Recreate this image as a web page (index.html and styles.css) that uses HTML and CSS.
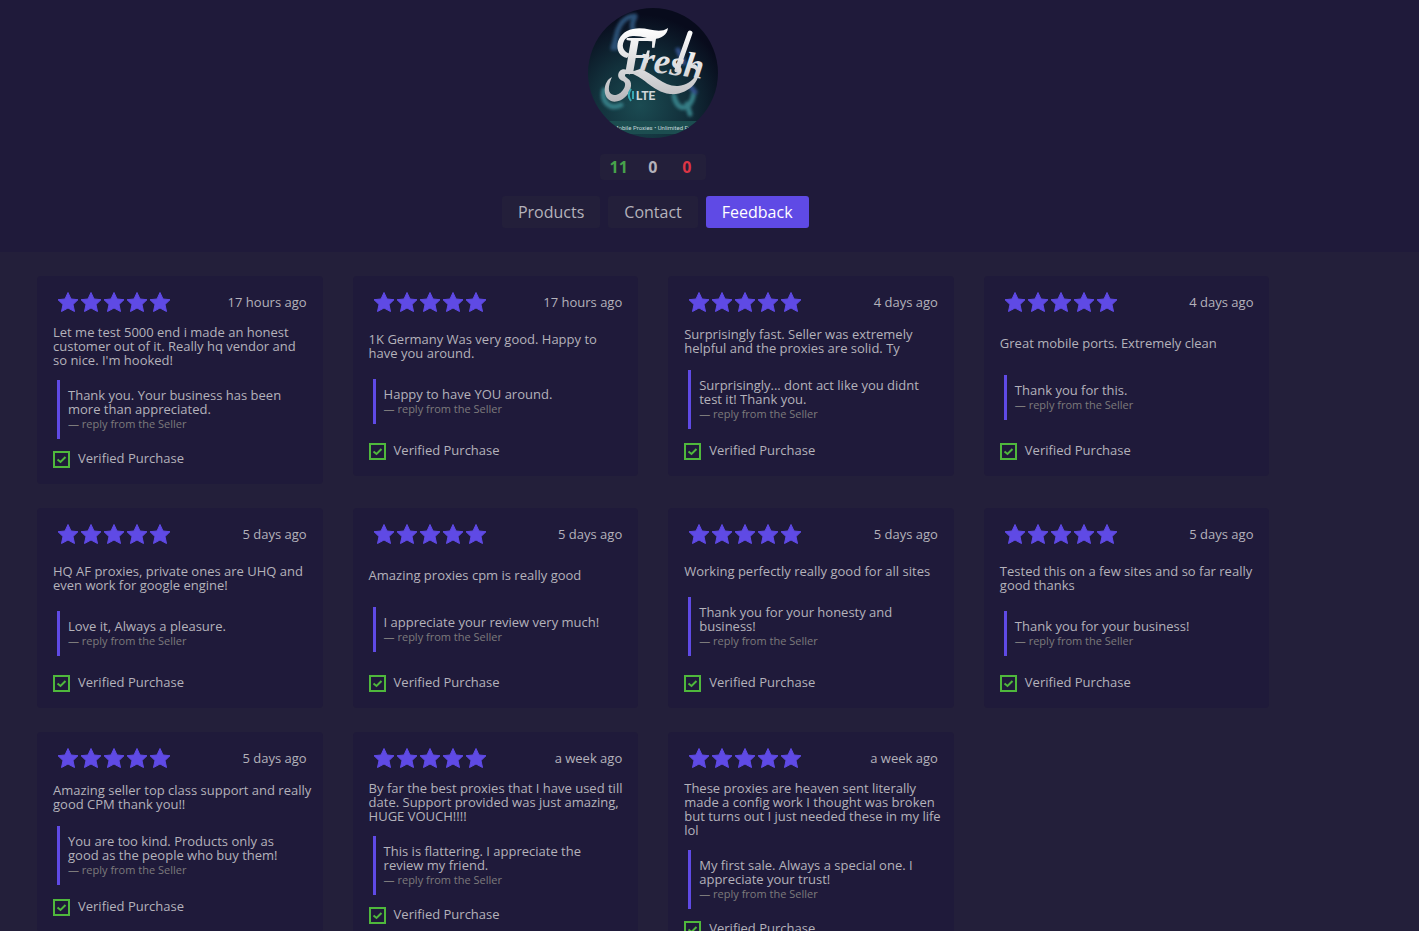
FILE: index.html
```
<!DOCTYPE html>
<html lang="en">

<head>
    <meta charset="UTF-8">
    <meta name="viewport" content="width=device-width, initial-scale=1.0">
    <title>Feedback</title>
    <link rel="stylesheet" href="styles.css">
</head>

<body>
    <svg class="sprite" aria-hidden="true">
        <symbol id="stars" viewBox="0 0 113 21">
            <g stroke-width="1" stroke-linejoin="round">
                <path id="star" d="M10 .500 13 7 20 7.700 15 12.500 16.500 19.500 10 16 3.500 19.500 5 12.500 0 7.700 7 7z" />
                <use href="#star" x="23" />
                <use href="#star" x="46" />
                <use href="#star" x="69" />
                <use href="#star" x="92" />
            </g>
        </symbol>
        <symbol id="check" viewBox="0 0 17 17">
            <rect x="1" y="1" width="15" height="15" fill="none" stroke-width="2" />
            <path d="M4.500 8.500 7.500 11 12.500 6" fill="none" stroke-width="2" />
        </symbol>
    </svg>

    <header class="top">
        <div class="inner">
            <svg class="avatar" viewBox="0 0 130 130" role="img" aria-label="Fresh LTE">
                <defs>
                    <clipPath id="circle">
                        <circle cx="65" cy="65" r="65" />
                    </clipPath>
                    <radialGradient id="sea" cx="0.400" cy="0.750" r="0.700">
                        <stop offset="0" stop-color="#1b4b52" />
                        <stop offset="0.500" stop-color="#12303b" />
                        <stop offset="1" stop-color="#080b1c" />
                    </radialGradient>
                    <linearGradient id="silver" gradientUnits="userSpaceOnUse" x1="0" y1="20" x2="0" y2="95">
                        <stop offset="0" stop-color="#ffffff" />
                        <stop offset="1" stop-color="#b4b5b9" />
                    </linearGradient>
                    <filter id="glow">
                        <feGaussianBlur stdDeviation="1.500" />
                    </filter>
                </defs>
                <g clip-path="url(#circle)">
                    <rect width="130" height="130" fill="url(#sea)" />
                    <g fill="none" filter="url(#glow)" stroke-linecap="round">
                        <path d="M47 8C34 8 26 23 28 40M29 26l-4 14M47 9c-3 6-4 9-1 16" stroke="#2a4f74" stroke-width="5" />
                        <path d="M16 82c-3 13 7 20 17 15M86 88c3 16 17 16 20-4M99 96l3 10" stroke="#347c84" stroke-width="5" />
                        <path d="M90 42l6 13M102 78l5 6" stroke="#304f88" stroke-width="5" />
                    </g>
                    <!-- swashes round the lettering -->
                    <g fill="url(#silver)">
                        <path d="M39 50C24 47 27 24 45 21c14-3 25 6 35-1-1 9-11 13-21 10-9-2-19-4-23 3-3 6 0 11 6 13z" />
                        <path d="M39 62c-8-4-13 8-4 11 6 3-2 15-9 14-7-1-6-9-2-18-9 4-10 20-1 24 8 3 19-5 20-15 1-8-7-8-6-11 1-2 3-2 5 0z" />
                        <path d="M40 60c14 1 24 19 42 21 18 2 34-15 27-28-2-3-6-2-7 2 12-1 6 16-12 18-14 1-25-13-38-17z" transform="translate(0 5)" />
                    </g>
                    <path d="M102 25 89 62" fill="none" stroke="url(#silver)" stroke-width="5" stroke-linecap="round" />
                    <g fill="url(#silver)" class="logo-script">
                        <text class="initial" x="33" y="66">F</text>
                        <text x="51" y="62" transform="rotate(8 51 62)">resh</text>
                    </g>
                    <g fill="none" stroke="#36a7b2" stroke-width="2">
                        <path d="M43 81c-3 4-3 8 0 12M45 83v8" />
                    </g>
                    <text class="logo-lte" x="48" y="92">LTE</text>
                    <rect y="113" width="130" height="13" fill="#1c4d50" />
                    <text class="logo-strip" x="65" y="122">te Mobile Proxies • Unlimited Fresh</text>
                </g>
            </svg>

            <div class="score">
                <span class="positive">11</span>
                <span class="neutral">0</span>
                <span class="negative">0</span>
            </div>

            <nav class="tabs">
                <button type="button">Products</button>
                <button type="button">Contact</button>
                <button type="button" class="active">Feedback</button>
            </nav>
        </div>
    </header>

    <main class="inner reviews">
        <article class="card">
            <div class="card-head">
                <svg class="stars" role="img" aria-label="5 stars"><use href="#stars" /></svg>
                <span>17 hours ago</span>
            </div>
            <p>Let me test 5000 end i made an honest customer out of it. Really hq vendor and<br>so nice. I'm hooked!</p>
            <blockquote>Thank you. Your business has been more than appreciated.<footer>— reply from the Seller</footer></blockquote>
            <div class="verified"><svg class="check"><use href="#check" /></svg><span>Verified Purchase</span></div>
        </article>

        <article class="card">
            <div class="card-head">
                <svg class="stars" role="img" aria-label="5 stars"><use href="#stars" /></svg>
                <span>17 hours ago</span>
            </div>
            <p>1K Germany Was very good. Happy to<br>have you around.</p>
            <blockquote>Happy to have YOU around.<footer>— reply from the Seller</footer></blockquote>
            <div class="verified"><svg class="check"><use href="#check" /></svg><span>Verified Purchase</span></div>
        </article>

        <article class="card">
            <div class="card-head">
                <svg class="stars" role="img" aria-label="5 stars"><use href="#stars" /></svg>
                <span>4 days ago</span>
            </div>
            <p>Surprisingly fast. Seller was extremely helpful and the proxies are solid. Ty</p>
            <blockquote>Surprisingly... dont act like you didnt test it! Thank you.<footer>— reply from the Seller</footer></blockquote>
            <div class="verified"><svg class="check"><use href="#check" /></svg><span>Verified Purchase</span></div>
        </article>

        <article class="card">
            <div class="card-head">
                <svg class="stars" role="img" aria-label="5 stars"><use href="#stars" /></svg>
                <span>4 days ago</span>
            </div>
            <p>Great mobile ports. Extremely clean</p>
            <blockquote>Thank you for this.<footer>— reply from the Seller</footer></blockquote>
            <div class="verified"><svg class="check"><use href="#check" /></svg><span>Verified Purchase</span></div>
        </article>

        <article class="card">
            <div class="card-head">
                <svg class="stars" role="img" aria-label="5 stars"><use href="#stars" /></svg>
                <span>5 days ago</span>
            </div>
            <p>HQ AF proxies, private ones are UHQ and even work for google engine!</p>
            <blockquote>Love it, Always a pleasure.<footer>— reply from the Seller</footer></blockquote>
            <div class="verified"><svg class="check"><use href="#check" /></svg><span>Verified Purchase</span></div>
        </article>

        <article class="card">
            <div class="card-head">
                <svg class="stars" role="img" aria-label="5 stars"><use href="#stars" /></svg>
                <span>5 days ago</span>
            </div>
            <p>Amazing proxies cpm is really good</p>
            <blockquote>I appreciate your review very much!<footer>— reply from the Seller</footer></blockquote>
            <div class="verified"><svg class="check"><use href="#check" /></svg><span>Verified Purchase</span></div>
        </article>

        <article class="card">
            <div class="card-head">
                <svg class="stars" role="img" aria-label="5 stars"><use href="#stars" /></svg>
                <span>5 days ago</span>
            </div>
            <p>Working perfectly really good for all sites</p>
            <blockquote>Thank you for your honesty and business!<footer>— reply from the Seller</footer></blockquote>
            <div class="verified"><svg class="check"><use href="#check" /></svg><span>Verified Purchase</span></div>
        </article>

        <article class="card">
            <div class="card-head">
                <svg class="stars" role="img" aria-label="5 stars"><use href="#stars" /></svg>
                <span>5 days ago</span>
            </div>
            <p>Tested this on a few sites and so far really good thanks</p>
            <blockquote>Thank you for your business!<footer>— reply from the Seller</footer></blockquote>
            <div class="verified"><svg class="check"><use href="#check" /></svg><span>Verified Purchase</span></div>
        </article>

        <article class="card">
            <div class="card-head">
                <svg class="stars" role="img" aria-label="5 stars"><use href="#stars" /></svg>
                <span>5 days ago</span>
            </div>
            <p>Amazing seller top class support and really good CPM thank you!!</p>
            <blockquote>You are too kind. Products only as good as the people who buy them!<footer>— reply from the Seller</footer></blockquote>
            <div class="verified"><svg class="check"><use href="#check" /></svg><span>Verified Purchase</span></div>
        </article>

        <article class="card">
            <div class="card-head">
                <svg class="stars" role="img" aria-label="5 stars"><use href="#stars" /></svg>
                <span>a week ago</span>
            </div>
            <p>By far the best proxies that I have used till date. Support provided was just amazing, HUGE VOUCH!!!!</p>
            <blockquote>This is flattering. I appreciate the review my friend.<footer>— reply from the Seller</footer></blockquote>
            <div class="verified"><svg class="check"><use href="#check" /></svg><span>Verified Purchase</span></div>
        </article>

        <article class="card">
            <div class="card-head">
                <svg class="stars" role="img" aria-label="5 stars"><use href="#stars" /></svg>
                <span>a week ago</span>
            </div>
            <p>These proxies are heaven sent literally made a config work I thought was broken but turns out I just needed these in my life lol</p>
            <blockquote>My first sale. Always a special one. I appreciate your trust!<footer>— reply from the Seller</footer></blockquote>
            <div class="verified"><svg class="check"><use href="#check" /></svg><span>Verified Purchase</span></div>
        </article>
    </main>
</body>

</html>
```
FILE: styles.css
```
* {
    box-sizing: border-box;
    margin: 0;
    padding: 0;
}

body {
    background: #231f3a;
    color: #b4b2bb;
    font-family: "Open Sans", sans-serif;
    font-size: 13px;
    line-height: 14px;
}

.sprite {
    display: none;
}

.inner {
    width: 92%;
}

/* seller header */
.top {
    background: #1f1a3a;
    padding: 8px 0 24px;
}

.top .inner {
    display: flex;
    flex-direction: column;
    align-items: center;
}

.avatar {
    width: 130px;
    height: 130px;
}

.logo-script {
    font: italic bold 36px "Liberation Serif", serif;
}

.logo-script .initial {
    font-size: 54px;
}

.logo-lte {
    font: bold 12px Roboto, sans-serif;
    fill: #d0d6d9;
}

.logo-strip {
    font: 6px Roboto, sans-serif;
    fill: #c3d6d7;
    text-anchor: middle;
}

.score {
    display: flex;
    margin: 16px 0;
    padding: 0 2px;
    border-radius: 4px;
    background: #231f3a;
    font-size: 16px;
    font-weight: bold;
    line-height: 26px;
    text-align: center;
}

.score span {
    width: 34px;
}

.positive {
    color: #47a34b;
}

.negative {
    color: #dc3545;
}

.tabs {
    display: flex;
    gap: 8px;
    padding-left: 5px;
}

.tabs button {
    padding: 0 16px;
    border: 0;
    border-radius: 3px;
    background: #231f3a;
    color: #b4b2bb;
    font-family: inherit;
    font-size: 16px;
    line-height: 32px;
    cursor: pointer;
}

.tabs .active {
    background: #5f4ae5;
    color: #fff;
}

/* review cards */
.reviews {
    display: grid;
    grid-template-columns: repeat(4, 1fr);
    align-items: start;
    gap: 24px 30px;
    padding: 24px 36px 24px 37px;
}

.card {
    display: flex;
    flex-direction: column;
    justify-content: space-between;
    min-height: 200px;
    padding: 16px;
    border-radius: 4px;
    background: #1f1a3a;
}

.card-head {
    display: flex;
    justify-content: space-between;
    margin-bottom: 12px;
    padding-left: 5px;
    line-height: 20px;
}

.card p {
    margin-right: -6px;
}

.stars {
    width: 113px;
    height: 21px;
    fill: #5f4ae5;
    stroke: #5f4ae5;
}

blockquote {
    margin: 13px 0 12px 4px;
    padding: 8px;
    border-left: 3px solid #5f4ae5;
}

blockquote footer {
    color: #7d7b7c;
    font-size: 11px;
    line-height: 15px;
}

.verified {
    display: flex;
    gap: 8px;
}

.check {
    width: 17px;
    height: 17px;
    stroke: #4fb83c;
}
```
